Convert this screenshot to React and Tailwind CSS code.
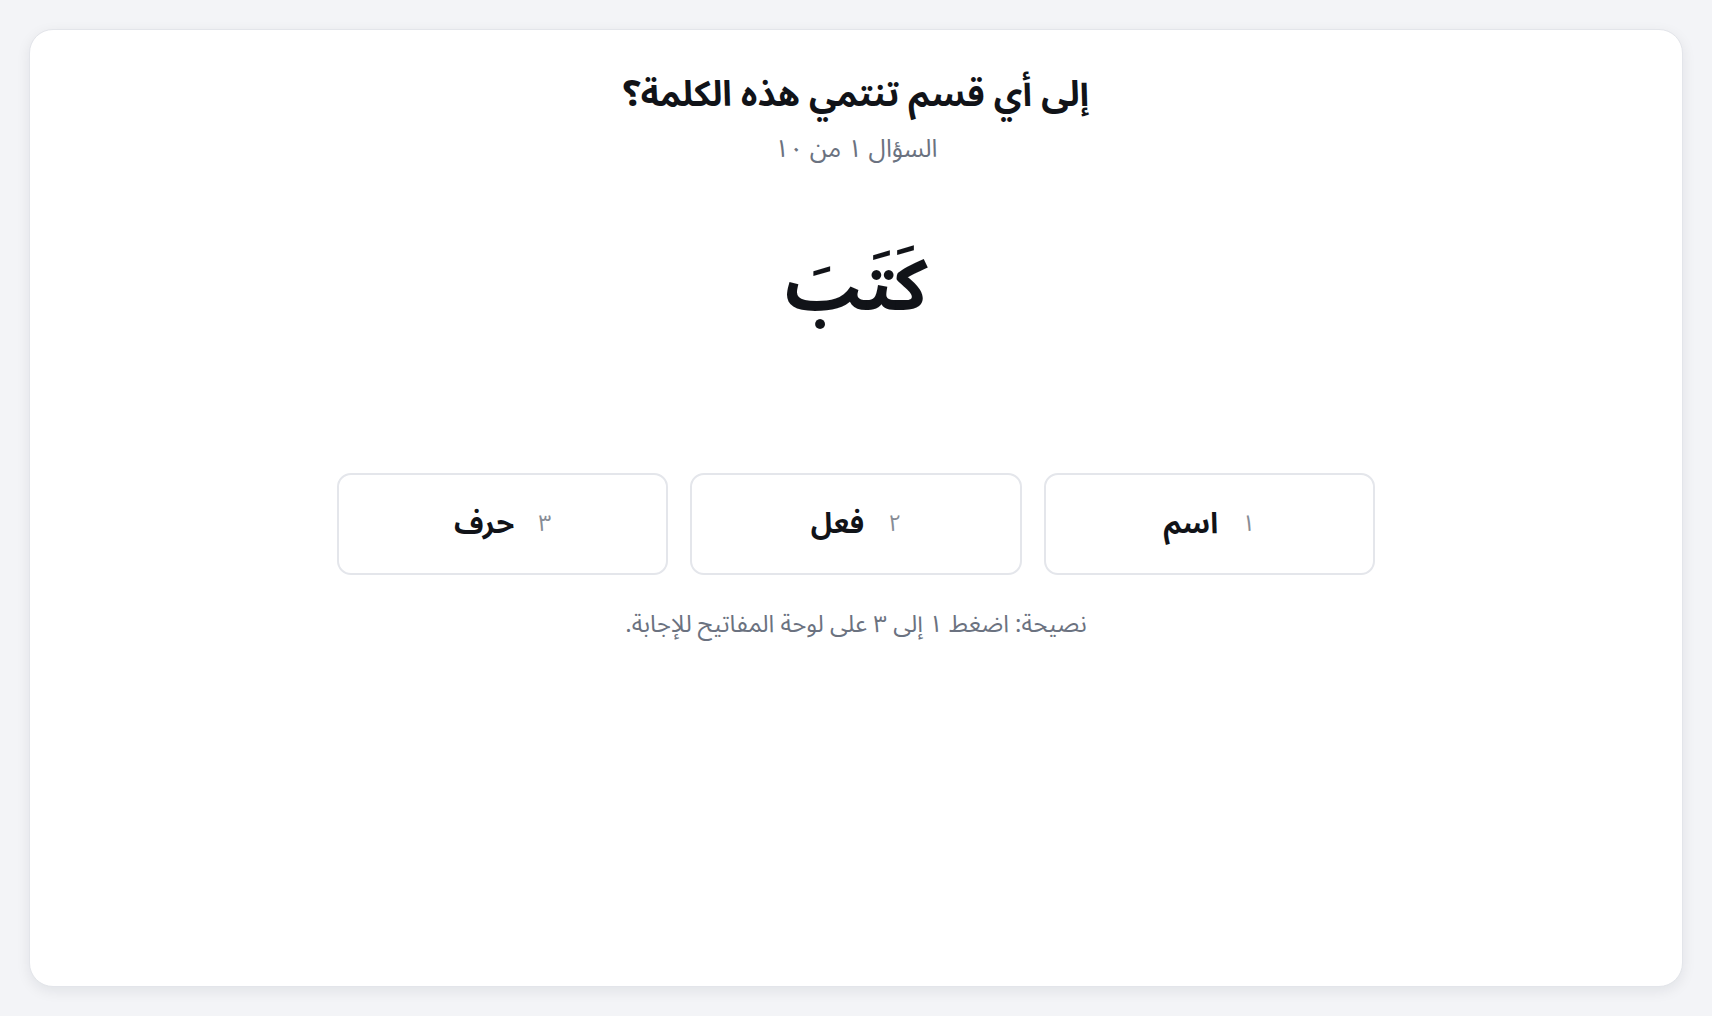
const options = [
  { n: '١', label: 'اسم' },
  { n: '٢', label: 'فعل' },
  { n: '٣', label: 'حرف' },
];

export default function App() {
  return (
    <div
      dir="rtl"
      className="min-h-screen bg-[#f3f4f7] p-[29px]"
      style={{ fontFamily: '"Noto Sans Arabic", "Noto Naskh Arabic", "DejaVu Sans", sans-serif' }}
    >
      <div className="h-[958px] rounded-3xl bg-white border border-[#e3e5ea] shadow-[0_4px_14px_rgba(15,23,42,0.08)] flex flex-col items-center pt-[43px]">
        <h1 className="text-[35px] leading-[44px] font-bold text-[#111318]">إلى أي قسم تنتمي هذه الكلمة؟</h1>
        <p className="mt-[14px] text-[25px] leading-[36px] text-[#6b7280]">السؤال ١ من ١٠</p>
        <div className="mt-[70px] text-[71px] leading-[100px] font-bold text-[#111318]">كَتَبَ</div>
        <div className="mt-[136px] grid grid-cols-3 gap-[22px] w-[1038px]">
          {options.map((o) => (
            <button
              key={o.n}
              className="h-[102px] rounded-[14px] border-2 border-[#e4e6eb] bg-white flex items-center justify-center gap-6"
            >
              <span className="text-[23px] leading-[30px] text-[#878c95]">{o.n}</span>
              <span className="text-[29px] leading-[40px] font-bold text-[#111318]">{o.label}</span>
            </button>
          ))}
        </div>
        <p className="mt-[34px] text-[24px] leading-[32px] text-[#6b7280]">
          نصيحة: اضغط ١ إلى ٣ على لوحة المفاتيح للإجابة.
        </p>
      </div>
    </div>
  );
}
